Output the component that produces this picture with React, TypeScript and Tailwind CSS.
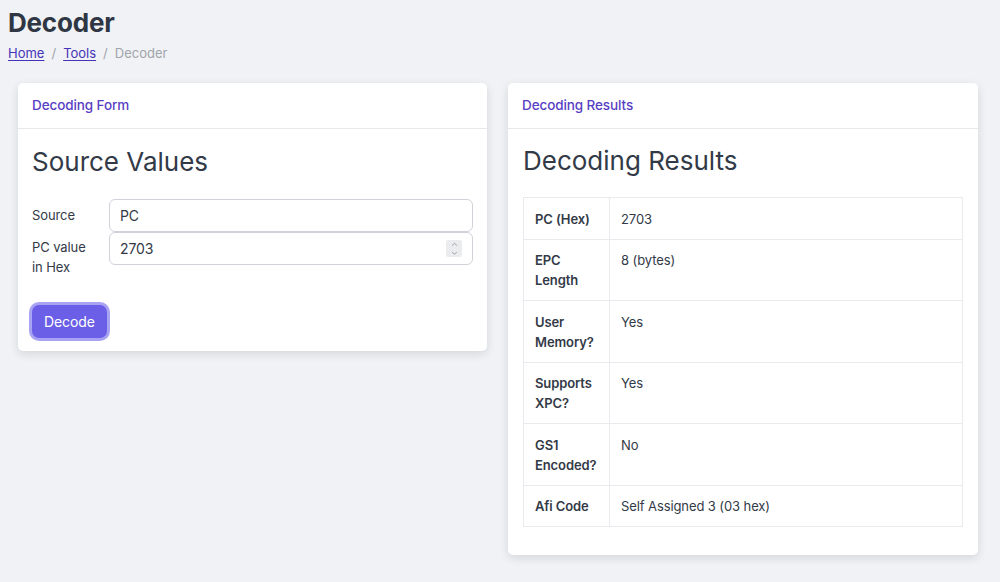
import { ChevronDown, ChevronUp } from "lucide-react";

const FONT = { fontFamily: "Inter, 'Noto Sans', 'Liberation Sans', sans-serif" };

const ROWS: { label: string; value: string }[] = [
  { label: "PC (Hex)", value: "2703" },
  { label: "EPC Length", value: "8 (bytes)" },
  { label: "User Memory?", value: "Yes" },
  { label: "Supports XPC?", value: "Yes" },
  { label: "GS1 Encoded?", value: "No" },
  { label: "Afi Code", value: "Self Assigned 3 (03 hex)" },
];

function Card({ title, children }: { title: string; children: React.ReactNode }) {
  return (
    <section className="rounded-[5px] bg-white shadow-[0_3px_10px_rgba(15,23,42,0.12)]">
      <header className="flex h-[46px] items-center border-b border-[#e6e8eb] px-[14px] text-[13.5px] font-medium tracking-[-0.1px] text-[#5740c4]">
        {title}
      </header>
      {children}
    </section>
  );
}

export default function App() {
  return (
    <div style={FONT} className="min-h-[582px] bg-[#f0f2f5] text-[#333a47]">
      <div className="px-[8px] pt-[5px]">
        <h1 className="text-[26px] leading-[36px] font-bold tracking-[-0.2px] text-[#2f3644]">Decoder</h1>
        <nav className="mt-[2px] flex items-center gap-[7px] text-[13px] leading-[20px]">
          <a className="text-[#4534b8] underline underline-offset-2">Home</a>
          <span className="text-[#a0a4ab]">/</span>
          <a className="text-[#4534b8] underline underline-offset-2">Tools</a>
          <span className="text-[#a0a4ab]">/</span>
          <span className="text-[#a0a4ab]">Decoder</span>
        </nav>
      </div>

      <div className="mt-[20px] grid grid-cols-[469px_470px] items-start gap-[21px] pl-[18px]">
        <Card title="Decoding Form">
          <div className="px-[14px] pt-[16px] pb-[13px]">
            <h2 className="text-[26px] leading-[34px] text-[#333a47]">Source Values</h2>
            <div className="mt-[20px] grid grid-cols-[77px_1fr] text-[13px] tracking-[-0.1px]">
              <label className="flex h-[33px] items-center">Source</label>
              <div className="flex h-[33px] items-center rounded-[6px] border border-[#cfd3d9] px-[10px] text-[14px]">PC</div>
              <label className="pt-[5px] leading-[20px]">
                PC value
                <br />
                in Hex
              </label>
              <div className="relative flex h-[33px] items-center rounded-[6px] border border-[#cfd3d9] px-[10px] text-[14px]">
                2703
                <span className="absolute top-[7px] right-[10px] flex h-[17px] w-[16px] flex-col items-center justify-center rounded-[2px] bg-[#ebecee] text-[#7b8089]">
                  <ChevronUp size={9} strokeWidth={2} />
                  <ChevronDown size={9} strokeWidth={2} />
                </span>
              </div>
            </div>
            <button className="mt-[28px] rounded-[7px] bg-[#6a5fe6] px-[12px] py-[6px] text-[14px] tracking-[-0.1px] text-white ring-[3px] ring-[#a8a3f2]">
              Decode
            </button>
          </div>
        </Card>

        <Card title="Decoding Results">
          <div className="px-[15px] pt-[15px] pb-[28px]">
            <h2 className="text-[26px] leading-[34px] text-[#333a47]">Decoding Results</h2>
            <table className="mt-[19px] w-full border-collapse text-[13px] leading-[20px] tracking-[-0.1px]">
              <tbody>
                {ROWS.map((r) => (
                  <tr key={r.label}>
                    <th className="w-[86px] border border-[#e8eaed] px-[11px] pt-[10.5px] pb-[10px] text-left align-top font-semibold text-[#333a47]">
                      {r.label}
                    </th>
                    <td className="border border-[#e8eaed] px-[11px] pt-[10.5px] pb-[10px] align-top">{r.value}</td>
                  </tr>
                ))}
              </tbody>
            </table>
          </div>
        </Card>
      </div>
    </div>
  );
}
